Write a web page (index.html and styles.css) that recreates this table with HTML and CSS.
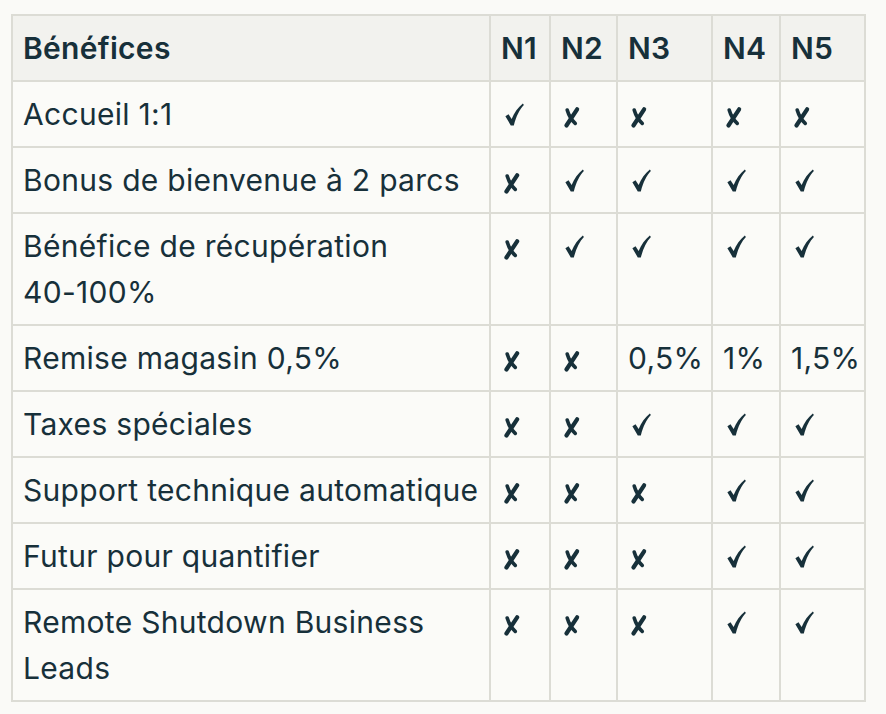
FILE: index.html
```html
<!DOCTYPE html>
<html lang="fr">
<head>
<meta charset="utf-8">
<title>Bénéfices</title>
<link rel="stylesheet" href="styles.css">
</head>
<body>
<div class="wrap">
<table class="tbl">
  <colgroup>
    <col class="c-label">
    <col class="c-n1">
    <col class="c-n2">
    <col class="c-n3">
    <col class="c-n4">
    <col class="c-n5">
  </colgroup>
  <thead>
    <tr><th>Bénéfices</th><th>N1</th><th>N2</th><th>N3</th><th>N4</th><th>N5</th></tr>
  </thead>
  <tbody>
    <tr><td>Accueil 1:1</td>
      <td><svg class="yes" viewBox="0 0 20 24"><path d="M0.4,13.8 L3.7,11.8 L7,16.8 C9.7,10.4 13.7,4.4 18.8,0.5 L19.9,2.1 C15.3,6.9 11.8,13.9 9.3,23.5 L6.1,23.5 Z" fill="#17303a"/></svg></td>
      <td><svg class="no" viewBox="0 0 17 22"><path d="M14.4,2.4 L3.2,19.4" fill="none" stroke="#17303a" stroke-width="4.4" stroke-linecap="round"/><path d="M4,3.2 C5.7,9 8.4,13.6 12.4,17.2" fill="none" stroke="#17303a" stroke-width="3.8" stroke-linecap="round"/></svg></td>
      <td><svg class="no" viewBox="0 0 17 22"><path d="M14.4,2.4 L3.2,19.4" fill="none" stroke="#17303a" stroke-width="4.4" stroke-linecap="round"/><path d="M4,3.2 C5.7,9 8.4,13.6 12.4,17.2" fill="none" stroke="#17303a" stroke-width="3.8" stroke-linecap="round"/></svg></td>
      <td><svg class="no" viewBox="0 0 17 22"><path d="M14.4,2.4 L3.2,19.4" fill="none" stroke="#17303a" stroke-width="4.4" stroke-linecap="round"/><path d="M4,3.2 C5.7,9 8.4,13.6 12.4,17.2" fill="none" stroke="#17303a" stroke-width="3.8" stroke-linecap="round"/></svg></td>
      <td><svg class="no" viewBox="0 0 17 22"><path d="M14.4,2.4 L3.2,19.4" fill="none" stroke="#17303a" stroke-width="4.4" stroke-linecap="round"/><path d="M4,3.2 C5.7,9 8.4,13.6 12.4,17.2" fill="none" stroke="#17303a" stroke-width="3.8" stroke-linecap="round"/></svg></td></tr>
    <tr><td>Bonus de bienvenue à 2 parcs</td>
      <td><svg class="no" viewBox="0 0 17 22"><path d="M14.4,2.4 L3.2,19.4" fill="none" stroke="#17303a" stroke-width="4.4" stroke-linecap="round"/><path d="M4,3.2 C5.7,9 8.4,13.6 12.4,17.2" fill="none" stroke="#17303a" stroke-width="3.8" stroke-linecap="round"/></svg></td>
      <td><svg class="yes" viewBox="0 0 20 24"><path d="M0.4,13.8 L3.7,11.8 L7,16.8 C9.7,10.4 13.7,4.4 18.8,0.5 L19.9,2.1 C15.3,6.9 11.8,13.9 9.3,23.5 L6.1,23.5 Z" fill="#17303a"/></svg></td>
      <td><svg class="yes" viewBox="0 0 20 24"><path d="M0.4,13.8 L3.7,11.8 L7,16.8 C9.7,10.4 13.7,4.4 18.8,0.5 L19.9,2.1 C15.3,6.9 11.8,13.9 9.3,23.5 L6.1,23.5 Z" fill="#17303a"/></svg></td>
      <td><svg class="yes" viewBox="0 0 20 24"><path d="M0.4,13.8 L3.7,11.8 L7,16.8 C9.7,10.4 13.7,4.4 18.8,0.5 L19.9,2.1 C15.3,6.9 11.8,13.9 9.3,23.5 L6.1,23.5 Z" fill="#17303a"/></svg></td>
      <td><svg class="yes" viewBox="0 0 20 24"><path d="M0.4,13.8 L3.7,11.8 L7,16.8 C9.7,10.4 13.7,4.4 18.8,0.5 L19.9,2.1 C15.3,6.9 11.8,13.9 9.3,23.5 L6.1,23.5 Z" fill="#17303a"/></svg></td></tr>
    <tr><td>Bénéfice de récupération<br>40-100%</td>
      <td><svg class="no" viewBox="0 0 17 22"><path d="M14.4,2.4 L3.2,19.4" fill="none" stroke="#17303a" stroke-width="4.4" stroke-linecap="round"/><path d="M4,3.2 C5.7,9 8.4,13.6 12.4,17.2" fill="none" stroke="#17303a" stroke-width="3.8" stroke-linecap="round"/></svg></td>
      <td><svg class="yes" viewBox="0 0 20 24"><path d="M0.4,13.8 L3.7,11.8 L7,16.8 C9.7,10.4 13.7,4.4 18.8,0.5 L19.9,2.1 C15.3,6.9 11.8,13.9 9.3,23.5 L6.1,23.5 Z" fill="#17303a"/></svg></td>
      <td><svg class="yes" viewBox="0 0 20 24"><path d="M0.4,13.8 L3.7,11.8 L7,16.8 C9.7,10.4 13.7,4.4 18.8,0.5 L19.9,2.1 C15.3,6.9 11.8,13.9 9.3,23.5 L6.1,23.5 Z" fill="#17303a"/></svg></td>
      <td><svg class="yes" viewBox="0 0 20 24"><path d="M0.4,13.8 L3.7,11.8 L7,16.8 C9.7,10.4 13.7,4.4 18.8,0.5 L19.9,2.1 C15.3,6.9 11.8,13.9 9.3,23.5 L6.1,23.5 Z" fill="#17303a"/></svg></td>
      <td><svg class="yes" viewBox="0 0 20 24"><path d="M0.4,13.8 L3.7,11.8 L7,16.8 C9.7,10.4 13.7,4.4 18.8,0.5 L19.9,2.1 C15.3,6.9 11.8,13.9 9.3,23.5 L6.1,23.5 Z" fill="#17303a"/></svg></td></tr>
    <tr><td>Remise magasin 0,5%</td>
      <td><svg class="no" viewBox="0 0 17 22"><path d="M14.4,2.4 L3.2,19.4" fill="none" stroke="#17303a" stroke-width="4.4" stroke-linecap="round"/><path d="M4,3.2 C5.7,9 8.4,13.6 12.4,17.2" fill="none" stroke="#17303a" stroke-width="3.8" stroke-linecap="round"/></svg></td>
      <td><svg class="no" viewBox="0 0 17 22"><path d="M14.4,2.4 L3.2,19.4" fill="none" stroke="#17303a" stroke-width="4.4" stroke-linecap="round"/><path d="M4,3.2 C5.7,9 8.4,13.6 12.4,17.2" fill="none" stroke="#17303a" stroke-width="3.8" stroke-linecap="round"/></svg></td>
      <td>0,5%</td><td>1%</td><td>1,5%</td></tr>
    <tr><td>Taxes spéciales</td>
      <td><svg class="no" viewBox="0 0 17 22"><path d="M14.4,2.4 L3.2,19.4" fill="none" stroke="#17303a" stroke-width="4.4" stroke-linecap="round"/><path d="M4,3.2 C5.7,9 8.4,13.6 12.4,17.2" fill="none" stroke="#17303a" stroke-width="3.8" stroke-linecap="round"/></svg></td>
      <td><svg class="no" viewBox="0 0 17 22"><path d="M14.4,2.4 L3.2,19.4" fill="none" stroke="#17303a" stroke-width="4.4" stroke-linecap="round"/><path d="M4,3.2 C5.7,9 8.4,13.6 12.4,17.2" fill="none" stroke="#17303a" stroke-width="3.8" stroke-linecap="round"/></svg></td>
      <td><svg class="yes" viewBox="0 0 20 24"><path d="M0.4,13.8 L3.7,11.8 L7,16.8 C9.7,10.4 13.7,4.4 18.8,0.5 L19.9,2.1 C15.3,6.9 11.8,13.9 9.3,23.5 L6.1,23.5 Z" fill="#17303a"/></svg></td>
      <td><svg class="yes" viewBox="0 0 20 24"><path d="M0.4,13.8 L3.7,11.8 L7,16.8 C9.7,10.4 13.7,4.4 18.8,0.5 L19.9,2.1 C15.3,6.9 11.8,13.9 9.3,23.5 L6.1,23.5 Z" fill="#17303a"/></svg></td>
      <td><svg class="yes" viewBox="0 0 20 24"><path d="M0.4,13.8 L3.7,11.8 L7,16.8 C9.7,10.4 13.7,4.4 18.8,0.5 L19.9,2.1 C15.3,6.9 11.8,13.9 9.3,23.5 L6.1,23.5 Z" fill="#17303a"/></svg></td></tr>
    <tr><td>Support technique automatique</td>
      <td><svg class="no" viewBox="0 0 17 22"><path d="M14.4,2.4 L3.2,19.4" fill="none" stroke="#17303a" stroke-width="4.4" stroke-linecap="round"/><path d="M4,3.2 C5.7,9 8.4,13.6 12.4,17.2" fill="none" stroke="#17303a" stroke-width="3.8" stroke-linecap="round"/></svg></td>
      <td><svg class="no" viewBox="0 0 17 22"><path d="M14.4,2.4 L3.2,19.4" fill="none" stroke="#17303a" stroke-width="4.4" stroke-linecap="round"/><path d="M4,3.2 C5.7,9 8.4,13.6 12.4,17.2" fill="none" stroke="#17303a" stroke-width="3.8" stroke-linecap="round"/></svg></td>
      <td><svg class="no" viewBox="0 0 17 22"><path d="M14.4,2.4 L3.2,19.4" fill="none" stroke="#17303a" stroke-width="4.4" stroke-linecap="round"/><path d="M4,3.2 C5.7,9 8.4,13.6 12.4,17.2" fill="none" stroke="#17303a" stroke-width="3.8" stroke-linecap="round"/></svg></td>
      <td><svg class="yes" viewBox="0 0 20 24"><path d="M0.4,13.8 L3.7,11.8 L7,16.8 C9.7,10.4 13.7,4.4 18.8,0.5 L19.9,2.1 C15.3,6.9 11.8,13.9 9.3,23.5 L6.1,23.5 Z" fill="#17303a"/></svg></td>
      <td><svg class="yes" viewBox="0 0 20 24"><path d="M0.4,13.8 L3.7,11.8 L7,16.8 C9.7,10.4 13.7,4.4 18.8,0.5 L19.9,2.1 C15.3,6.9 11.8,13.9 9.3,23.5 L6.1,23.5 Z" fill="#17303a"/></svg></td></tr>
    <tr><td>Futur pour quantifier</td>
      <td><svg class="no" viewBox="0 0 17 22"><path d="M14.4,2.4 L3.2,19.4" fill="none" stroke="#17303a" stroke-width="4.4" stroke-linecap="round"/><path d="M4,3.2 C5.7,9 8.4,13.6 12.4,17.2" fill="none" stroke="#17303a" stroke-width="3.8" stroke-linecap="round"/></svg></td>
      <td><svg class="no" viewBox="0 0 17 22"><path d="M14.4,2.4 L3.2,19.4" fill="none" stroke="#17303a" stroke-width="4.4" stroke-linecap="round"/><path d="M4,3.2 C5.7,9 8.4,13.6 12.4,17.2" fill="none" stroke="#17303a" stroke-width="3.8" stroke-linecap="round"/></svg></td>
      <td><svg class="no" viewBox="0 0 17 22"><path d="M14.4,2.4 L3.2,19.4" fill="none" stroke="#17303a" stroke-width="4.4" stroke-linecap="round"/><path d="M4,3.2 C5.7,9 8.4,13.6 12.4,17.2" fill="none" stroke="#17303a" stroke-width="3.8" stroke-linecap="round"/></svg></td>
      <td><svg class="yes" viewBox="0 0 20 24"><path d="M0.4,13.8 L3.7,11.8 L7,16.8 C9.7,10.4 13.7,4.4 18.8,0.5 L19.9,2.1 C15.3,6.9 11.8,13.9 9.3,23.5 L6.1,23.5 Z" fill="#17303a"/></svg></td>
      <td><svg class="yes" viewBox="0 0 20 24"><path d="M0.4,13.8 L3.7,11.8 L7,16.8 C9.7,10.4 13.7,4.4 18.8,0.5 L19.9,2.1 C15.3,6.9 11.8,13.9 9.3,23.5 L6.1,23.5 Z" fill="#17303a"/></svg></td></tr>
    <tr><td>Remote Shutdown Business<br>Leads</td>
      <td><svg class="no" viewBox="0 0 17 22"><path d="M14.4,2.4 L3.2,19.4" fill="none" stroke="#17303a" stroke-width="4.4" stroke-linecap="round"/><path d="M4,3.2 C5.7,9 8.4,13.6 12.4,17.2" fill="none" stroke="#17303a" stroke-width="3.8" stroke-linecap="round"/></svg></td>
      <td><svg class="no" viewBox="0 0 17 22"><path d="M14.4,2.4 L3.2,19.4" fill="none" stroke="#17303a" stroke-width="4.4" stroke-linecap="round"/><path d="M4,3.2 C5.7,9 8.4,13.6 12.4,17.2" fill="none" stroke="#17303a" stroke-width="3.8" stroke-linecap="round"/></svg></td>
      <td><svg class="no" viewBox="0 0 17 22"><path d="M14.4,2.4 L3.2,19.4" fill="none" stroke="#17303a" stroke-width="4.4" stroke-linecap="round"/><path d="M4,3.2 C5.7,9 8.4,13.6 12.4,17.2" fill="none" stroke="#17303a" stroke-width="3.8" stroke-linecap="round"/></svg></td>
      <td><svg class="yes" viewBox="0 0 20 24"><path d="M0.4,13.8 L3.7,11.8 L7,16.8 C9.7,10.4 13.7,4.4 18.8,0.5 L19.9,2.1 C15.3,6.9 11.8,13.9 9.3,23.5 L6.1,23.5 Z" fill="#17303a"/></svg></td>
      <td><svg class="yes" viewBox="0 0 20 24"><path d="M0.4,13.8 L3.7,11.8 L7,16.8 C9.7,10.4 13.7,4.4 18.8,0.5 L19.9,2.1 C15.3,6.9 11.8,13.9 9.3,23.5 L6.1,23.5 Z" fill="#17303a"/></svg></td></tr>
  </tbody>
</table>
</div>
</body>
</html>
```

FILE: styles.css
```css
html, body {
  margin: 0;
  background: #fafaf7;
}
.wrap {
  padding: 14px 0 0 11px;
}
.tbl {
  table-layout: fixed;
  width: 855px;
  border-collapse: separate;
  border-spacing: 0;
  border-left: 2px solid #dcdcd5;
  border-top: 2px solid #dcdcd5;
  font-family: Inter, "Liberation Sans", sans-serif;
  font-size: 30px;
  letter-spacing: 0.3px;
  color: #17303a;
}
.c-label { width: 478px; }
.c-n1 { width: 60px; }
.c-n2 { width: 67px; }
.c-n3 { width: 95px; }
.c-n4 { width: 68px; }
.c-n5 { width: 85px; }
.tbl th, .tbl td {
  box-sizing: border-box;
  height: 66px;
  padding: 9px 10px;
  line-height: 46px;
  border-right: 2px solid #dcdcd5;
  border-bottom: 2px solid #dcdcd5;
  text-align: left;
  vertical-align: top;
  white-space: nowrap;
  background: #fbfbf8;
  font-weight: 400;
}
.tbl th {
  background: #f2f2ee;
  font-weight: 600;
}
.yes, .no {
  display: inline-block;
  overflow: visible;
}
.yes {
  width: 19px;
  height: 23px;
  margin-left: 4px;
  vertical-align: -1px;
}
.no {
  width: 17px;
  height: 21px;
  margin-left: 2px;
  vertical-align: -3px;
}
```
